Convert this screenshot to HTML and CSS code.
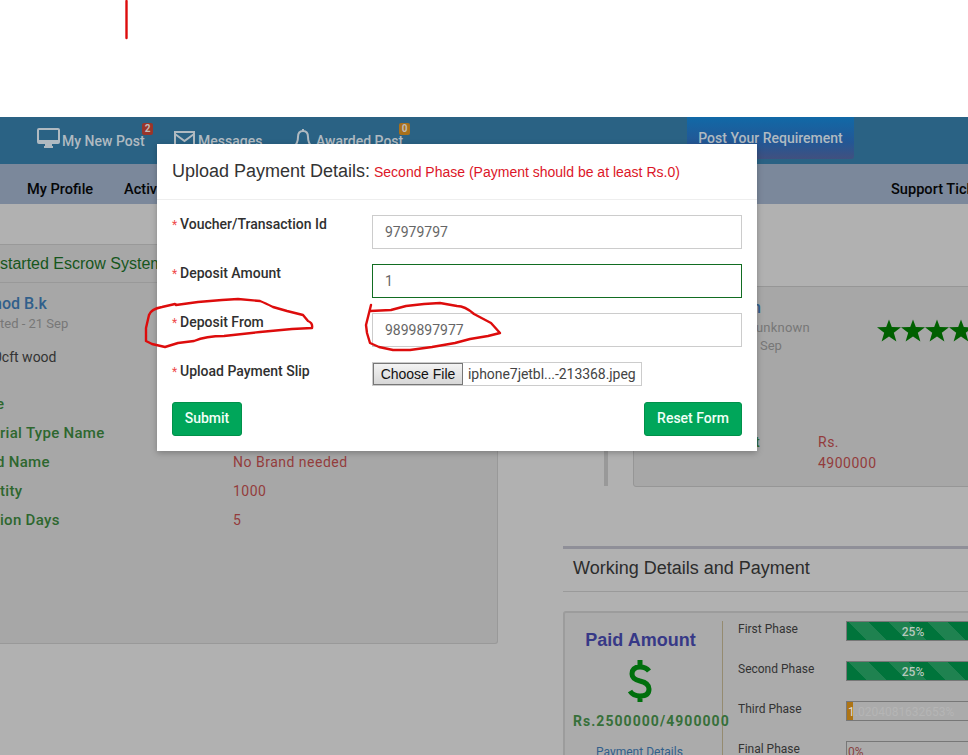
FILE: index.html
```
<!DOCTYPE html>
<html lang="en">
<head>
<meta charset="utf-8">
<title>Upload Payment Details</title>
<link rel="stylesheet" href="styles.css">
</head>
<body>
<div class="page">
  <div class="blank"></div>
  <nav class="topbar">
    <a class="nav-item post"><svg class="monitor" width="23" height="20" viewBox="0 0 23 20"><path fill-rule="evenodd" d="M2 0h19q2 0 2 2v12q0 2-2 2h-6v2h1v2H7v-2h1v-2H2q-2 0-2-2V2q0-2 2-2zm0 2v10h19V2z"/></svg><span>My New Post</span><b class="badge red">2</b></a>
    <a class="nav-item messages"><svg width="21" height="16" viewBox="0 0 21 16"><path class="stroke" d="M1 1h19v14H1zM1 3l9.500 7L20 3"/></svg><span>Messages</span></a>
    <a class="nav-item awarded"><svg width="20" height="21" viewBox="0 0 20 21"><path class="stroke" d="M10 0v2M1 18q4-4 4-10 0-6 5-6t5 6q0 6 4 10z"/></svg><span>Awarded Post</span><b class="badge orange">0</b></a>
    <a class="requirement">Post Your Requirement</a>
  </nav>
  <nav class="subnav"><span class="profile">My Profile</span><span class="active-posts">Active</span><span class="support">Support Tickets</span></nav>
  <main class="main">
    <section class="escrow">
      <h3><span>started Escrow System</span></h3>
      <div class="owner">nod B.k</div>
      <div class="posted">ted - 21 Sep</div>
      <div class="desc">0cft wood</div>
      <dl class="specs">
        <dt class="s1">e</dt><dd></dd>
        <dt class="s2">rial Type Name</dt><dd></dd>
        <dt class="s3">d Name</dt><dd>No Brand needed</dd>
        <dt class="s4">tity</dt><dd>1000</dd>
        <dt class="s5">ion Days</dt><dd>5</dd>
      </dl>
    </section>
    <div class="right">
      <div class="bidder-row">
        <div class="divider"></div>
        <section class="bidder">
          <div class="person">
            <div><div class="bidname">n</div><div class="place">unknown</div><div class="date">Sep</div></div>
            <svg class="stars" width="96" height="24" viewBox="0 0 96 24">
              <defs><path id="star" d="M12 .5l2.800 7.500 9.200.3-7.200 5.400 2.600 8.800-7.400-5-7.400 5 2.600-8.800L0 8.300 9.200 8z"/></defs>
              <use href="#star"/><use href="#star" x="24"/><use href="#star" x="48"/><use href="#star" x="72"/>
            </svg>
          </div>
          <div class="total"><span class="total-label">t</span><span class="total-value">Rs.<br>4900000</span></div>
        </section>
      </div>
      <h2 class="working">Working Details and Payment</h2>
      <section class="payment">
        <div class="paid">
          <div class="paid-title">Paid Amount</div>
          <svg class="dollar" width="24" height="42" viewBox="0 0 24 42"><path d="M21 11Q18 7 12 7 4 7 4 14q0 5 8 7 9 2 9 8 0 7-9 7-7 0-10-5M12 0v7m0 29v6"/></svg>
          <div class="sum">Rs.2500000/4900000</div>
          <div class="details">Payment Details</div>
        </div>
        <div class="phases">
          <div class="phase"><span>First Phase</span><div class="bar full"><span>25%</span></div></div>
          <div class="phase"><span>Second Phase</span><div class="bar full"><span>25%</span></div></div>
          <div class="phase"><span>Third Phase</span><div class="bar third"><i></i><span><b>1</b>.0204081632653%</span></div></div>
          <div class="phase"><span>Final Phase</span><div class="bar final"><span>0%</span></div></div>
        </div>
      </section>
    </div>
  </main>
</div>
<form class="modal">
  <header><span class="modal-title">Upload Payment Details:</span><span class="note">Second Phase (Payment should be at least Rs.0)</span></header>
  <div class="fields">
    <div class="row"><label><i>*</i>Voucher/Transaction Id</label><div class="input">97979797</div></div>
    <div class="row"><label><i>*</i>Deposit Amount</label><div class="input valid">1</div></div>
    <div class="row"><label><i>*</i>Deposit From</label><div class="input">9899897977</div></div>
    <div class="row"><label><i>*</i>Upload Payment Slip</label><div class="file"><span class="choose">Choose File</span><span class="filename">iphone7jetbl...-213368.jpeg</span></div></div>
    <div class="actions"><button type="button" class="submit">Submit</button><button type="button" class="reset">Reset Form</button></div>
  </div>
</form>
<svg class="marks" width="968" height="755" viewBox="0 0 968 755">
  <path d="M126.500 1V38"/>
  <path d="M177 305L175 304 162 307Q151 309 149 315L146 328V341L152 344 165 347 178 343 194 341Q206 336 224 336L260 332 292 329 312 328Q313 323 308 321L303 315 287 311 273 307Q265 303 260 301L238 299 222 300 198 302 176 305"/>
  <path d="M371 305L366 325 367 333 370 343 379 347 393 350 410 350 432 347 455 343 470 339 488 336 500 333 491 323 474 314Q465 306 457 306L440 303 424 304 406 306 391 310 370 311"/>
</svg>
</body>
</html>
```
FILE: styles.css
```
* { box-sizing: border-box; }
body { margin: 0; width: 968px; height: 755px; overflow: hidden; position: relative; font-family: Roboto, "Liberation Sans", sans-serif; font-size: 14px; color: #333; }
.page { width: 968px; height: 755px; overflow: hidden; background: #b1b1b1; white-space: nowrap; }
.blank { height: 117px; background: #fff; }
.topbar { height: 47px; background: #2a6284; display: flex; align-items: flex-start; color: #b0bac1; }
.nav-item { display: flex; align-items: flex-start; height: 47px; position: relative; font-weight: 500; font-size: 14px; line-height: 20px; }
.nav-item > span { margin-top: 14px; }
.nav-item svg { fill: #b0bac1; flex: none; }
.nav-item .stroke { fill: none; stroke: #b0bac1; stroke-width: 2; }
.post { margin-left: 37px; width: 137px; gap: 2px; }
.post svg { margin-top: 11px; }
.messages { width: 119px; gap: 3px; }
.messages svg { margin-top: 14px; }
.awarded { width: 394px; gap: 3px; }
.awarded svg { margin-top: 12px; }
.badge { position: absolute; top: 6px; width: 11px; height: 12px; border-radius: 2px; color: #c0bcb8; font: 700 10px/12px Roboto, sans-serif; text-align: center; }
.red { left: 105px; background: #9a352a; }
.orange { left: 106px; background: #a8701b; }
.requirement { width: 167px; height: 42px; padding-top: 11px; text-align: center; font-weight: 500; line-height: 20px; background: linear-gradient(#1169a7, #235795 60%, #41507f); border-radius: 0 0 3px 3px; }
.subnav { height: 40px; background: #7b889b; color: #050607; font-size: 14.600px; font-weight: 500; line-height: 20px; padding: 15px 0 0 27px; display: flex; }
.profile { width: 97px; flex: none; }
.active-posts { width: 767px; flex: none; }
.main { display: flex; height: 551px; }
.escrow { width: 498px; height: 400px; margin-top: 40px; background: #a7a7a7; border: solid #999; border-width: 1px 1px 1px 0; border-radius: 0 0 3px 0; overflow: hidden; flex: none; }
.escrow h3 { margin: 0; height: 38px; border-bottom: 1px solid #999; font: 400 16px/37px "Liberation Sans", sans-serif; color: #16561c; }
.owner { margin: 10px 0 0 -7px; font-weight: 500; font-size: 16px; line-height: 22px; color: #315f8b; }
.posted { line-height: 18px; font-size: 13px; color: #777; }
.desc { margin: 14px 0 0 -6px; line-height: 20px; color: #333; }
.specs { margin: 23px 0 0; display: grid; grid-template-columns: 233px 1fr; grid-auto-rows: 29px; line-height: 29px; letter-spacing: .3px; }
.specs dt { color: #2e672f; font-weight: 500; font-size: 15px; }
.s1 { margin-left: -4px; }
.s3 { margin-left: -4px; }
.specs dd { margin: 0; color: #933c3c; letter-spacing: .5px; }
.right { flex: none; width: 405px; margin-left: 65px; }
.bidder-row { display: flex; padding-left: 41px; height: 282px; }
.divider { width: 4px; height: 282px; background: #999; margin-right: 25px; flex: none; }
.bidder { width: 350px; height: 201px; margin-top: 82px; border: 1px solid #969696; background: #a7a7a7; border-radius: 3px; flex: none; }
.person { display: flex; justify-content: space-between; height: 145px; padding: 11px 14px 0 119px; font-size: 13px; line-height: 18px; color: #777; }
.bidname { color: #315f8b; font-size: 16px; font-weight: 500; line-height: 20px; margin-left: -1px; }
.place { margin-left: 3px; margin-top: 1px; letter-spacing: .2px; }
.date { margin-left: 7px; }
.stars { fill: #006000; margin-top: 21px; margin-right: -5px; flex: none; }
.total { display: flex; line-height: 21px; letter-spacing: .5px; padding-left: 121px; color: #933c3c; }
.total-label { width: 63px; color: #2e672f; font-weight: 500; }
.working { margin: 60px 0 0; height: 46px; border-top: 3px solid #8f8f98; border-bottom: 1px solid #9a9a9a; padding-left: 10px; font: 400 18px/38px "Liberation Sans", sans-serif; color: #2c2c2c; }
.payment { display: flex; width: 420px; height: 220px; margin-top: 19px; border: 2px solid #9c9c9c; border-radius: 3px; background: #ababab; padding-top: 7px; }
.paid { width: 158px; border-right: 1px solid #958b70; text-align: center; height: 180px; margin-top: 1px; flex: none; display: flex; flex-direction: column; align-items: center; }
.paid-title { font: 700 18px/24px "Liberation Sans", sans-serif; color: #373987; margin-top: 7px; margin-left: -6px; }
.dollar { margin: 8px 0 0 -8px; fill: none; stroke: #006f0d; stroke-width: 5; flex: none; }
.sum { margin-top: 9px; align-self: flex-start; margin-left: 8px; line-height: 20px; font-weight: 700; letter-spacing: 1.050px; color: #37703a; }
.details { margin: 11px 0 0 -8px; font-size: 12px; line-height: 20px; color: #315f8b; }
.phases { margin: 0 0 0 15px; font-size: 12px; }
.phase { height: 40px; display: flex; align-items: flex-start; line-height: 18px; }
.phase > span { width: 108px; }
.bar { width: 134px; height: 20px; margin-top: 1px; border: 1px solid #777; line-height: 20px; text-align: center; font-size: 12px; position: relative; }
.full { color: #b7c9bd; font-weight: 500; background: repeating-linear-gradient(45deg, #00743b 0 14px, #1f8250 14px 28px); }
.third { display: flex; color: #b5b5b5; }
.third i { width: 6px; height: 18px; background: #ad7414; flex: none; }
.third span { margin-left: -5px; }
.third b { font-weight: 400; color: #ddd; position: relative; }
.final { text-align: left; color: #873f3f; padding-left: 1px; }
.modal { position: absolute; left: 157px; top: 144px; width: 600px; height: 307px; background: #fff; box-shadow: 0 2px 6px rgba(0,0,0,.25); white-space: nowrap; }
.modal header { height: 56px; border-bottom: 1px solid #eee; padding: 15px 0 0 15px; display: flex; line-height: 24px; font-family: "Liberation Sans", sans-serif; }
.modal-title { width: 202px; font-size: 18px; color: #333; }
.note { font-size: 14px; line-height: 27px; color: #dc1628; }
.fields { padding: 15px 15px 0; }
.row { display: flex; height: 49px; }
.row label { width: 200px; line-height: 18px; font-weight: 500; color: #303030; }
.row i { display: inline-block; width: 8px; font-style: normal; font-size: 12px; color: #ef4b4b; font-weight: 400; }
.input { width: 370px; height: 34px; border: 1px solid #ccc; padding-left: 12px; line-height: 33px; color: #666; }
.valid { border-color: #126d22; }
.file { width: 270px; height: 24px; border: 1px solid #ccc; display: flex; color: #444; line-height: 22px; }
.choose { width: 90px; height: 22px; border: 1px solid #777; background: linear-gradient(#f3f3f3, #d7d7d7); color: #111; font-family: "Liberation Sans", sans-serif; font-size: 14px; text-align: center; line-height: 20px; margin-right: 5px; flex: none; }
.filename { font-size: 14px; letter-spacing: -.050px; }
.actions { display: flex; justify-content: space-between; margin-top: -9px; }
.actions button { height: 34px; padding: 0 0 2px; border: 1px solid #00914a; border-radius: 3px; background: #00a65a; color: #f1fff7; font: 500 14px/20px Roboto, sans-serif; }
.actions .submit { width: 70px; }
.actions .reset { width: 98px; }
.marks { position: absolute; left: 0; top: 0; pointer-events: none; }
.marks path { fill: none; stroke: #dd0c0c; stroke-width: 2.400; stroke-linejoin: round; stroke-linecap: round; }
```
